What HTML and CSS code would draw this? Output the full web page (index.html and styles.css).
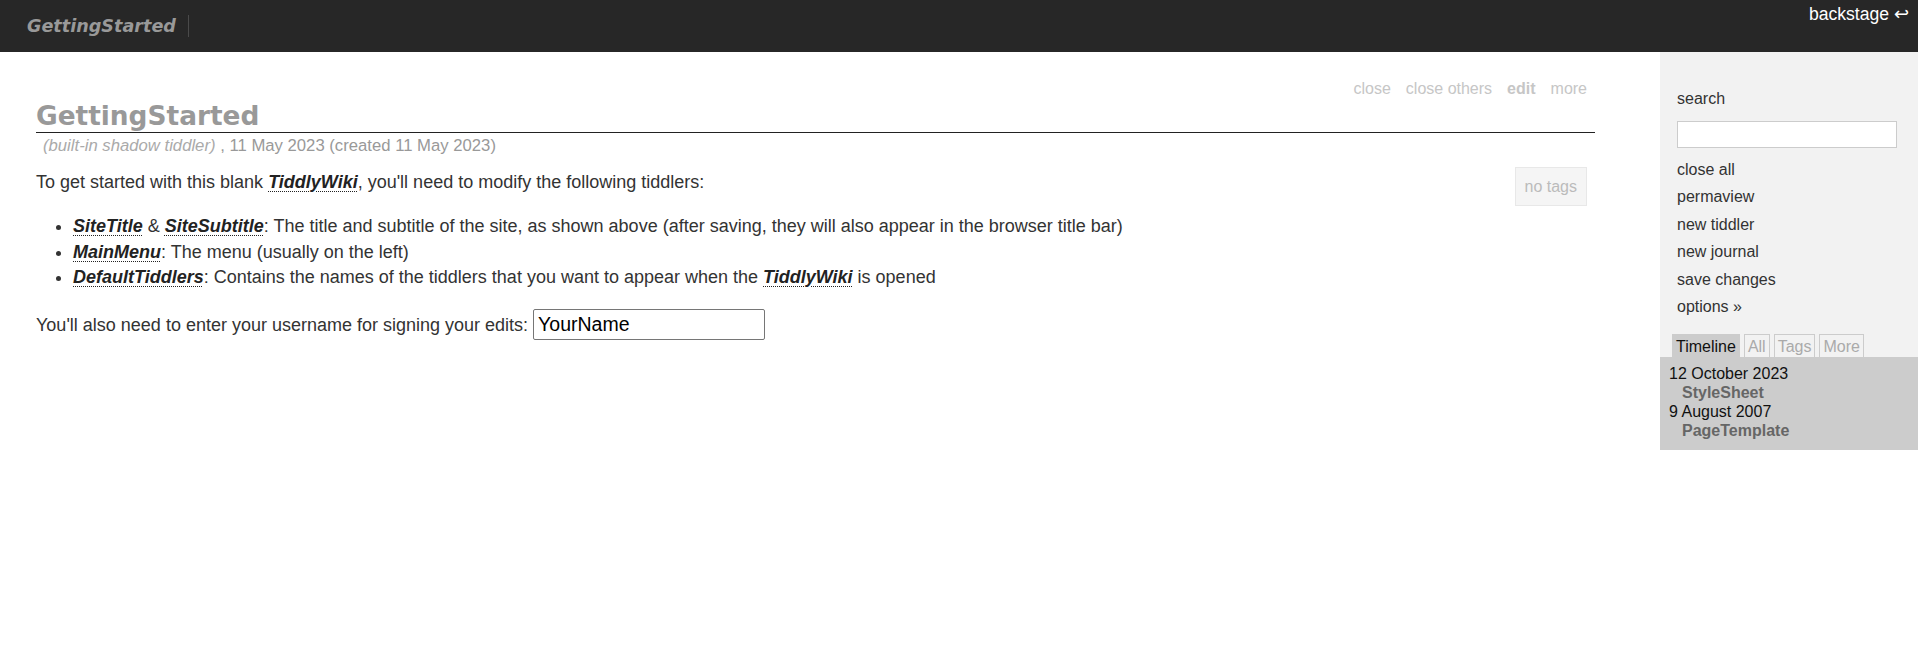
FILE: index.html
```html
<!DOCTYPE html>
<html>
<head>
<meta charset="utf-8">
<title>GettingStarted</title>
<link rel="stylesheet" href="styles.css">
</head>
<body>
<header class="header">
  <div class="site-title">GettingStarted</div>
  <a class="backstage">backstage ↩</a>
</header>
<div class="layout">
  <main class="story">
    <div class="tiddler">
      <div class="toolbar">
        <span>close</span><span>close others</span><span class="bold">edit</span><span>more</span>
      </div>
      <h1 class="title">GettingStarted</h1>
      <div class="subtitle"><em>(built-in shadow tiddler)</em> , 11 May 2023 (created 11 May 2023)</div>
      <div class="tagged">no tags</div>
      <div class="viewer">
        <p>To get started with this blank <a class="link">TiddlyWiki</a>, you'll need to modify the following tiddlers:</p>
        <ul>
          <li><a class="link">SiteTitle</a> &amp; <a class="link">SiteSubtitle</a>: The title and subtitle of the site, as shown above (after saving, they will also appear in the browser title bar)</li>
          <li><a class="link">MainMenu</a>: The menu (usually on the left)</li>
          <li><a class="link">DefaultTiddlers</a>: Contains the names of the tiddlers that you want to appear when the <a class="link">TiddlyWiki</a> is opened</li>
        </ul>
        <p>You'll also need to enter your username for signing your edits: <input class="username" value="YourName"></p>
      </div>
    </div>
  </main>
  <aside class="sidebar">
    <div class="options">
      <div class="search-label">search</div>
      <input class="search">
      <ul class="menu">
        <li>close all</li>
        <li>permaview</li>
        <li>new tiddler</li>
        <li>new journal</li>
        <li>save changes</li>
        <li>options »</li>
      </ul>
      <div class="tabs">
        <span class="tab active">Timeline</span><span class="tab">All</span><span class="tab">Tags</span><span class="tab">More</span>
      </div>
    </div>
    <div class="tab-content">
      <div class="date">12 October 2023</div>
      <div class="entry">StyleSheet</div>
      <div class="date">9 August 2007</div>
      <div class="entry">PageTemplate</div>
    </div>
  </aside>
</div>
</body>
</html>
```
FILE: styles.css
```css
body {
  margin: 0;
  font-family: "Liberation Sans", Arial, sans-serif;
  color: #333;
  background: #fff;
}

.header {
  height: 52px;
  background: #272727;
  display: flex;
}

.site-title {
  align-self: center;
  margin-left: 27px;
  padding-right: 12px;
  border-right: 1px solid #4a4a4a;
  font-family: "DejaVu Sans", sans-serif;
  font-weight: bold;
  font-style: italic;
  font-size: 17.6px;
  line-height: 22px;
  color: #999;
}

.backstage {
  margin-left: auto;
  margin-right: 9px;
  margin-top: 4px;
  align-self: flex-start;
  color: #fff;
  font-size: 17.6px;
  line-height: 20px;
}

.layout {
  display: flex;
  align-items: flex-start;
}

.story {
  flex: 1;
  min-width: 0;
  padding: 28px 65px 0 36px;
}

.toolbar {
  display: flex;
  justify-content: flex-end;
  gap: 15px;
  margin-right: 8px;
  font-size: 16px;
  line-height: 18px;
  color: #c6c6c6;
}

.bold {
  font-weight: bold;
}

.title {
  margin: 2px 0 0;
  padding-bottom: 1px;
  border-bottom: 1px solid #222;
  font-family: "DejaVu Sans", sans-serif;
  font-weight: bold;
  font-size: 26.4px;
  line-height: 31px;
  color: #999;
}

.subtitle {
  margin-top: 3px;
  padding-left: 7px;
  font-size: 16.7px;
  line-height: 19px;
  color: #999;
}

.subtitle em {
  color: #aaa;
}

.tagged {
  float: right;
  margin: 12px 8px 0 12px;
  height: 39px;
  box-sizing: border-box;
  padding: 0 9px;
  line-height: 37px;
  border: 1px solid #e8e8e8;
  background: #f5f5f5;
  color: #bbb;
  font-size: 16px;
}

.viewer {
  padding-top: 14.5px;
  font-size: 18px;
  line-height: 25.6px;
  color: #333;
}

.viewer p {
  margin: 0;
}

.viewer ul {
  margin: 19px 0 18px;
  padding-left: 37px;
}

.link {
  font-weight: bold;
  font-style: italic;
  color: #222;
  text-decoration: underline dotted 1px;
  text-underline-offset: 3px;
}

.username {
  width: 232px;
  height: 31px;
  box-sizing: border-box;
  font-family: "Liberation Sans", Arial, sans-serif;
  font-size: 19.5px;
  color: #000;
  padding: 0 4px;
  border: 1px solid #767676;
  border-radius: 2px;
}

.sidebar {
  width: 258px;
  flex: none;
}

.options {
  background: #f2f2f2;
  padding: 38px 0 0 17px;
  font-size: 16px;
  color: #333;
}

.search-label {
  line-height: 18px;
}

.search {
  display: block;
  margin-top: 13px;
  width: 220px;
  height: 27px;
  box-sizing: border-box;
  border: 1px solid #ccc;
  background: #fff;
  padding: 0 4px;
}

.menu {
  list-style: none;
  margin: 8px 0 0;
  padding: 0;
}

.menu li {
  line-height: 27.4px;
}

.tabs {
  display: flex;
  gap: 4px;
  margin: 13.5px 0 0 -5px;
}

.tab {
  height: 23px;
  box-sizing: border-box;
  padding: 0 3px;
  line-height: 23px;
  border: 1px solid #ccc;
  border-bottom: none;
  color: #aaa;
  background: #f2f2f2;
}

.tab.active {
  background: #ccc;
  color: #111;
}

.tab-content {
  background: #ccc;
  padding: 7.5px 9px 10px;
  font-size: 16px;
  line-height: 19px;
  color: #111;
}

.entry {
  padding-left: 13px;
  font-weight: bold;
  color: #666;
}
```
